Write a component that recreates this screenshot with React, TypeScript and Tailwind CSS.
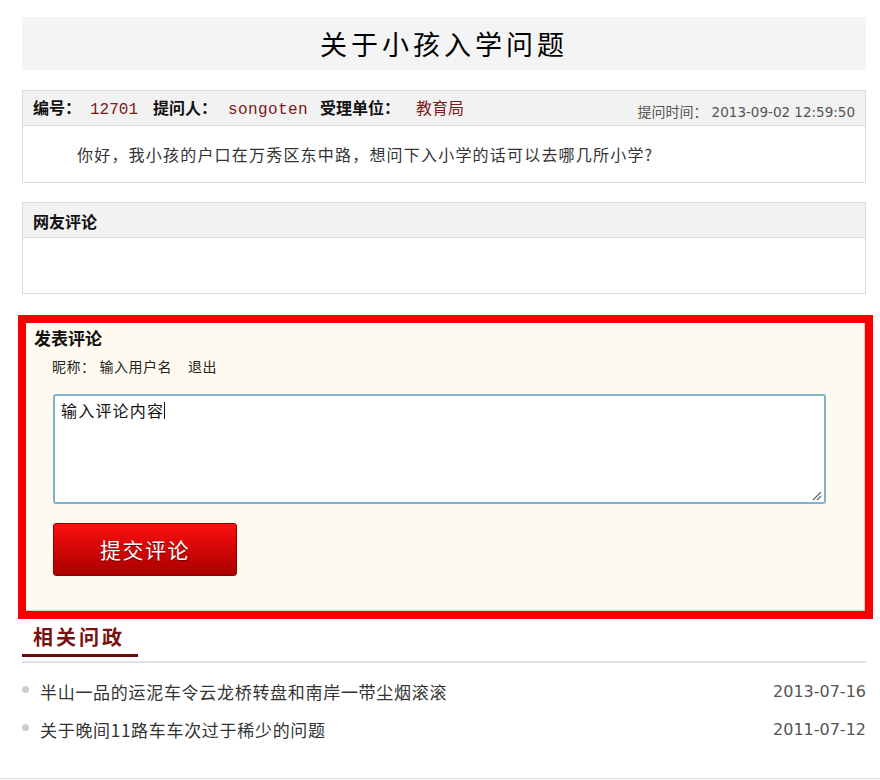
import React from "react";

const cjk = "font-['Noto_Sans_CJK_SC',sans-serif]";

const related = [
  { title: "半山一品的运泥车令云龙桥转盘和南岸一带尘烟滚滚", date: "2013-07-16" },
  { title: "关于晚间11路车车次过于稀少的问题", date: "2011-07-12" },
];

const App: React.FC = () => {
  return (
    <div className={`w-[880px] h-[779px] bg-white border-b border-[#dcdfe3] ${cjk} text-[#333]`}>
      <div className="ml-[22px] w-[844px] pt-[17px]">
        {/* Title */}
        <div className="h-[53px] bg-[#f4f4f4] flex items-center justify-center">
          <h1 className="text-[27px] tracking-[4px] text-black leading-none">关于小孩入学问题</h1>
        </div>

        {/* Question box */}
        <div className="mt-[20px] border border-[#dcdcdc]">
          <div className="h-[35px] bg-[#f2f2f2] border-b border-[#dcdcdc] flex items-center justify-between pl-[10px] pr-[10px]">
            <div className="flex items-baseline text-[16px] leading-none text-[#111]">
              <span className="font-bold mr-[9px]">编号：</span>
              <span className="font-['Liberation_Mono',monospace] text-[#7a1a1a]">12701</span>
              <span className="font-bold ml-[15px] mr-[11px]">提问人：</span>
              <span className="font-['Liberation_Mono',monospace] text-[#7a1a1a] tracking-[0.4px]">songoten</span>
              <span className="font-bold ml-[12px] mr-[16px]">受理单位：</span>
              <span className="text-[#7a1a1a]">教育局</span>
            </div>
            <div className="mt-[7px] text-[14px] leading-none text-[#555]">
              提问时间：<span className="ml-[4px] font-['DejaVu_Sans',sans-serif] text-[13.5px]">2013-09-02 12:59:50</span>
            </div>
          </div>
          <div className="h-[56px] flex items-center pl-[54px] text-[16px] tracking-[1.2px] text-[#333]">
            你好，我小孩的户口在万秀区东中路，想问下入小学的话可以去哪几所小学?
          </div>
        </div>

        {/* Comments */}
        <div className="mt-[19px] border border-[#dcdcdc]">
          <div className="h-[35px] bg-[#f2f2f2] border-b border-[#dcdcdc] flex items-center pl-[10px] pt-[2px]">
            <span className="font-bold text-[16px] text-[#111]">网友评论</span>
          </div>
          <div className="h-[55px]" />
        </div>

        {/* Post comment */}
        <div className="mt-[21px] -ml-[4px] w-[855px] border-[8px] border-[#f80000]">
          <div className="bg-[#fefaf0] border-r border-b border-[#d4d0c8] pl-[8px] pt-[4px] pb-[34px]">
            <div className="text-[17px] leading-[22px] font-bold text-[#111]">发表评论</div>
            <div className="mt-[7px] ml-[18px] text-[14px] leading-[20px] text-[#222] tracking-[0.5px]">
              昵称：<span className="ml-[4px]">输入用户名</span><span className="ml-[16px]">退出</span>
            </div>
            <div className="relative mt-[18px] ml-[19px] w-[773px] h-[110px] bg-white border-2 border-[#7eb3cd] rounded-[3px] pl-[6px] pt-[4px]">
              <div className="flex items-center text-[16px] leading-[20px] tracking-[1.2px] text-[#111]">
                输入评论内容<span className="inline-block w-[1px] h-[17px] bg-[#111]" />
              </div>
              <svg className="absolute right-[2px] bottom-[1px]" width="10" height="10" viewBox="0 0 10 10">
                <path d="M1 9 L9 1 M5 9 L9 5" stroke="#666" strokeWidth="1.2" fill="none" />
              </svg>
            </div>
            <button className="mt-[19px] ml-[19px] w-[184px] h-[53px] rounded-[3px] border border-[#8a0000] bg-gradient-to-b from-[#ff1010] to-[#a80000] text-white text-[21px] tracking-[1.5px] [text-shadow:0_1px_1px_rgba(80,0,0,0.8)]">
              提交评论
            </button>
          </div>
        </div>

        {/* Related */}
        <div className="mt-[4px] border-b-2 border-[#e2e2e2]">
          <div className="w-[116px] pl-[11px] pb-[3px] mb-[4px] border-b-[3px] border-[#6b0a0a]">
            <span className="text-[20px] leading-[28px] font-bold tracking-[3px] text-[#7a1111]">相关问政</span>
          </div>
        </div>
        <ul className="mt-[10px]">
          {related.map((item) => (
            <li key={item.date} className="h-[38px] flex items-center justify-between">
              <div className="flex items-center">
                <span className="w-[7px] h-[7px] rounded-full bg-[#c8cfd6] -mt-[5px]" />
                <span className="ml-[11px] text-[17px] tracking-[0.7px] text-[#333]">{item.title}</span>
              </div>
              <span className="font-['DejaVu_Sans',sans-serif] text-[16px] text-[#555]">{item.date}</span>
            </li>
          ))}
        </ul>
      </div>
    </div>
  );
};

export default App;
